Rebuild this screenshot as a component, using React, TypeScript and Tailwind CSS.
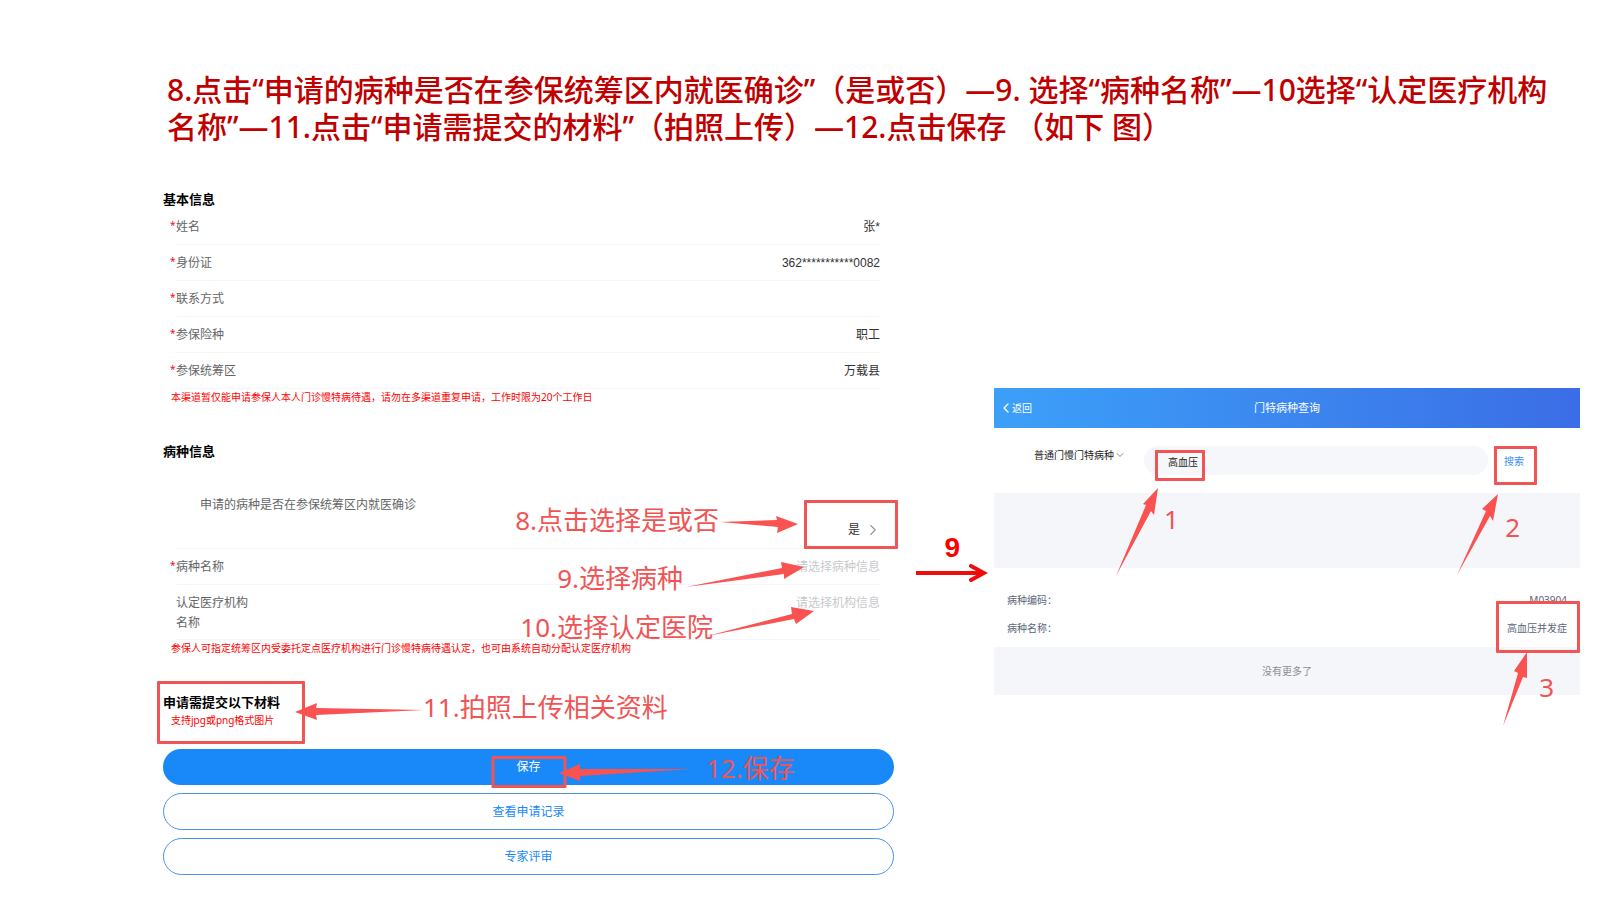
import { useState } from 'react';
import { ChevronDown, ChevronLeft, ChevronRight } from 'lucide-react';

interface Field {
  id: string;
  label: string;
  value: string;
}

const basicFields: Field[] = [
  { id: 'name', label: '姓名', value: '张*' },
  { id: 'idcard', label: '身份证', value: '362***********0082' },
  { id: 'phone', label: '联系方式', value: '' },
  { id: 'insurance', label: '参保险种', value: '职工' },
  { id: 'region', label: '参保统筹区', value: '万载县' },
];

function Star({ show = true }: { show?: boolean }) {
  return <span className="w-[6px] shrink-0 pt-1.5 text-[10px] leading-5 text-[#ee0a24]">{show ? '*' : ''}</span>;
}

function FieldRow({ field }: { field: Field }) {
  return (
    <div className="flex h-9 pr-[14px] pl-[7px]">
      <Star />
      <div className="flex flex-1 items-center justify-between border-b border-[#f5f5f5]">
        <label htmlFor={field.id} className="text-[#646566]">
          {field.label}
        </label>
        <input
          id={field.id}
          readOnly
          defaultValue={field.value}
          className="w-40 bg-transparent text-right font-['Liberation_Sans','Noto_Sans_CJK_SC',sans-serif] text-[#323233] outline-none"
        />
      </div>
    </div>
  );
}

// 标注箭头
function Arrow({ className, width, height, points }: { className: string; width: number; height: number; points: string }) {
  return (
    <svg className={`pointer-events-none absolute fill-[#fa5151] ${className}`} width={width} height={height} viewBox={`0 0 ${width} ${height}`}>
      <polygon points={points} />
    </svg>
  );
}

// 标注框
function Frame({ className }: { className: string }) {
  return <div className={`pointer-events-none absolute rounded-[1px] border-3 border-[#f05454] ${className}`} />;
}

function Note({ className, children }: { className: string; children: string }) {
  return (
    <p className={`pointer-events-none absolute text-[26px] leading-[30px] whitespace-nowrap text-[#f05454] ${className}`}>
      {children}
    </p>
  );
}

function ApplyForm() {
  return (
    <form className="relative text-[12px] leading-5" onSubmit={(e) => e.preventDefault()}>
      <h2 className="h-5 text-[13px] font-bold text-black">基本信息</h2>
      {basicFields.map((field) => (
        <FieldRow key={field.id} field={field} />
      ))}
      <p className="pl-2 text-[10px] leading-4 text-[#ff0000]">
        本渠道暂仅能申请参保人本人门诊慢特病待遇，请勿在多渠道重复申请，工作时限为20个工作日
      </p>

      <h2 className="mt-9 h-5 text-[13px] font-bold text-black">病种信息</h2>
      <div className="mr-[14px] ml-[13px] flex h-[88px] justify-between border-b border-[#f5f5f5] pl-6">
        <span className="self-center text-[#646566]">申请的病种是否在参保统筹区内就医确诊</span>
        <button type="button" className="-mr-0.5 flex h-9 items-center gap-1 self-end text-[#323233]">
          是
          <ChevronRight size={18} strokeWidth={1.5} className="text-[#969799]" />
        </button>
      </div>
      <div className="flex h-9 pr-[14px] pl-[7px]">
        <Star />
        <div className="flex flex-1 items-center justify-between border-b border-[#f5f5f5]">
          <label htmlFor="disease" className="text-[#646566]">
            病种名称
          </label>
          <input
            id="disease"
            readOnly
            placeholder="请选择病种信息"
            className="w-40 bg-transparent text-right outline-none placeholder:text-[#c8c9cc]"
          />
        </div>
      </div>
      <div className="flex h-[55px] pr-[14px] pl-[7px]">
        <Star show={false} />
        <div className="flex flex-1 items-start justify-between border-b border-[#f5f5f5] pt-2">
          <label htmlFor="hospital" className="w-[72px] text-[#646566]">
            认定医疗机构名称
          </label>
          <input
            id="hospital"
            readOnly
            placeholder="请选择机构信息"
            className="w-40 bg-transparent text-right outline-none placeholder:text-[#c8c9cc]"
          />
        </div>
      </div>
      <p className="pl-2 text-[10px] leading-4 text-[#ff0000]">
        参保人可指定统筹区内受委托定点医疗机构进行门诊慢特病待遇认定，也可由系统自动分配认定医疗机构
      </p>

      <h2 className="mt-9 h-5 text-[13px] font-bold text-black">申请需提交以下材料</h2>
      <p className="pl-2 text-[10px] leading-4 text-[#ff0000]">支持jpg或png格式图片</p>

      <div className="mt-[21px] flex flex-col gap-2">
        <button type="submit" className="h-9 rounded-full bg-[#1989fa] text-white">
          保存
        </button>
        <button type="button" className="h-[37px] rounded-full border border-[#4a94e8] text-[#1989fa]">
          查看申请记录
        </button>
        <button type="button" className="h-[37px] rounded-full border border-[#4a94e8] text-[#1989fa]">
          专家评审
        </button>
      </div>

      <Note className="top-[316px] right-[175px]">8.点击选择是或否</Note>
      <Arrow className="top-[326px] right-[95px]" width={79} height={18} points="0,7 57,5 56,1 78,9 57,18 58,12" />
      <Frame className="top-[311px] -right-1 h-[49px] w-[94px]" />

      <Note className="top-[374px] right-[211px]">9.选择病种</Note>
      <Arrow className="top-[372px] right-[89px]" width={119} height={27} points="0,26 96,7 95,1 118,6 98,18 98,13" />

      <Note className="top-[423px] right-[181px]">10.选择认定医院</Note>
      <Arrow className="top-[418px] right-[79px]" width={108} height={30} points="0,29 85,7 84,0 107,4 89,17 87,12" />

      <Frame className="top-[492px] -left-[6px] h-[63px] w-[148px]" />
      <Arrow className="top-[514px] left-[132px]" width={130} height={18} points="0,9 22,0 21,5 129,7 21,12 22,17" />
      <Note className="top-[503px] left-[260px]">11.拍照上传相关资料</Note>

      <Frame className="top-[567px] left-1/2 h-8 w-[75px] -translate-x-1/2" />
      <Arrow className="top-[575px] left-[396px]" width={134} height={17} points="0,9 21,0 21,5 133,5 21,12 21,17" />
      <Note className="top-[564px] left-[543px]">12.保存</Note>
    </form>
  );
}

function DiseaseSearch() {
  const [keyword, setKeyword] = useState('高血压');

  return (
    <section className="relative mt-[199px] text-[10px] leading-4">
      <header className="grid h-10 grid-cols-3 items-center bg-linear-to-r from-[#3ca0f8] to-[#3b6de6] px-1 text-white">
        <button type="button" className="flex items-center">
          <ChevronLeft size={16} strokeWidth={2} className="-mr-0.5" />
          返回
        </button>
        <h2 className="text-center text-[11px]">门特病种查询</h2>
      </header>

      <div className="flex h-[65px] items-center pr-[56px] pl-[40px]">
        <div className="mb-3 flex w-[110px] shrink-0 items-center">
          <select aria-label="病种类别" className="appearance-none bg-transparent text-[#222222] outline-none">
            <option>普通门慢门特病种</option>
          </select>
          <ChevronDown size={12} strokeWidth={2} className="text-[#888888]" />
        </div>
        <input
          aria-label="病种名称关键字"
          value={keyword}
          onChange={(e) => setKeyword(e.target.value)}
          className="h-[29px] min-w-0 flex-1 rounded-full bg-[#f5f7fa] pt-0.5 pl-6 text-[#222222] outline-none"
        />
        <button type="button" className="ml-4 shrink-0 text-[#3b8ff0]">
          搜索
        </button>
      </div>

      <div className="h-[75px] bg-[#f5f6fa]" />

      <dl className="flex h-[79px] flex-col gap-3 px-[13px] pt-6 text-[#5b6478]">
        <div className="flex justify-between">
          <dt>病种编码：</dt>
          <dd>M03904</dd>
        </div>
        <div className="flex justify-between">
          <dt>病种名称：</dt>
          <dd>高血压并发症</dd>
        </div>
      </dl>

      <p className="bg-[#f5f6fa] py-4 text-center text-[#8c8c8c]">没有更多了</p>

      <Frame className="top-[62px] left-[161px] h-[31px] w-[50px]" />
      <Arrow className="top-[100px] left-[122px]" width={43} height={89} points="0,88 30,17 27,16 42,0 38,27 35,23" />
      <Note className="top-[116px] left-[170px]">1</Note>

      <Frame className="top-[58px] right-[43px] h-[39px] w-[43px]" />
      <Arrow className="top-[106px] right-[81px]" width={42} height={82} points="0,81 29,17 25,15 41,0 36,27 33,22" />
      <Note className="top-[124px] right-[60px]">2</Note>

      <Frame className="top-[213px] right-0 h-[52px] w-[84px]" />
      <Arrow className="top-[264px] right-[52px]" width={25} height={75} points="0,74 15,21 11,19 24,0 24,26 20,25" />
      <Note className="top-[284px] right-[26px]">3</Note>
    </section>
  );
}

export default function App() {
  return (
    <main className="min-h-screen bg-white font-['Noto_Sans','Noto_Sans_CJK_SC',sans-serif]">
      <h1 className="pt-[71px] pr-9 pl-[167px] text-[30px] leading-[37px] font-medium text-[#c00000] [text-spacing-trim:space-all]">
        8.点击“申请的病种是否在参保统筹区内就医确诊”（是或否）—9. 选择“病种名称”—10选择“认定医疗机构名称”—11.点击“申请需提交的材料”（拍照上传）—12.点击保存 （如下 图）
      </h1>

      <div className="mt-11 grid grid-cols-[731fr_100px_586fr] items-start pr-5 pl-[163px]">
        <ApplyForm />

        <div className="flex flex-col items-end pt-[343px] pr-[6px]">
          <span className="pr-7 font-['Liberation_Sans',sans-serif] text-[28px] leading-8 font-bold text-[#ff0000]">9</span>
          <svg width="72" height="20" viewBox="0 0 72 20" fill="none" stroke="#ee0c0c" strokeWidth="4">
            <path d="M0 9H68" />
            <path d="M55 2L68 9L55 16" strokeLinecap="round" />
          </svg>
        </div>

        <DiseaseSearch />
      </div>
    </main>
  );
}
